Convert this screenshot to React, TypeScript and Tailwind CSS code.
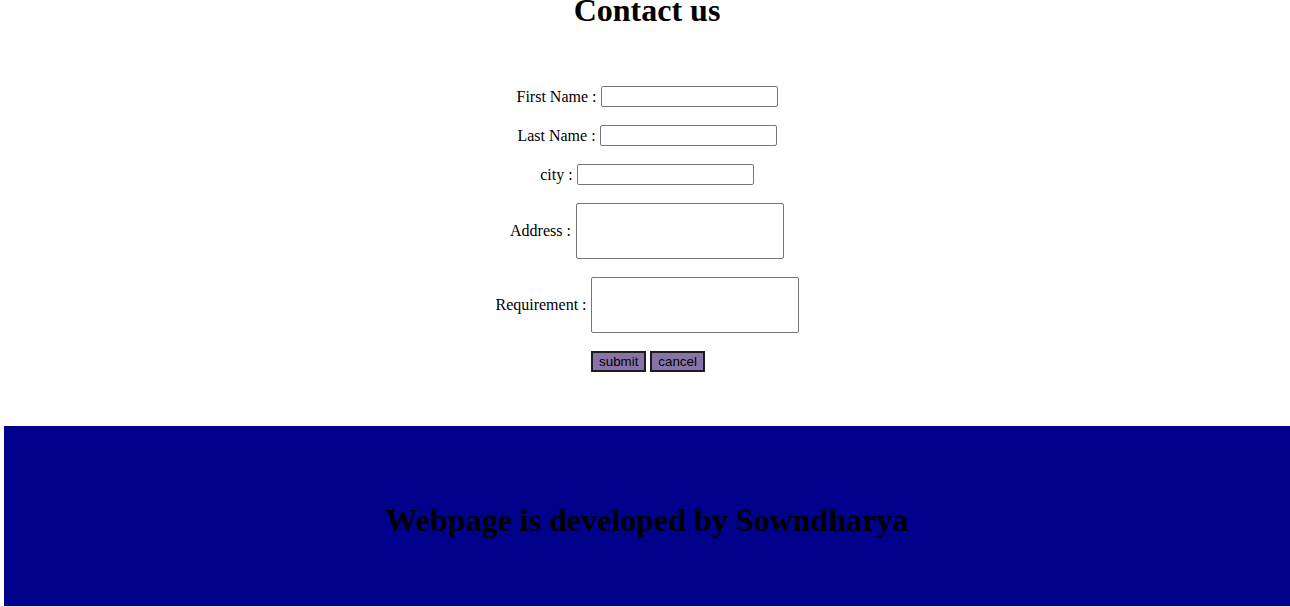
import React from 'react';

const serif = { fontFamily: '"Liberation Serif", "Times New Roman", serif' };

function Row({ label, children }: { label: string; children: React.ReactNode }) {
  return (
    <div className="flex items-center justify-center gap-1 text-base leading-[18px] text-black">
      <span>{label} :</span>
      {children}
    </div>
  );
}

export default function App() {
  return (
    <div className="bg-white pl-1 h-[607px] overflow-hidden flex flex-col" style={serif}>
      <h1 className="mt-[-8px] text-[32px] leading-[37px] font-bold text-center text-black">Contact us</h1>

      <form className="mt-[57px] flex flex-col gap-[18px]" onSubmit={e => e.preventDefault()}>
        <Row label="First Name">
          <input type="text" className="w-[177px] h-[21px] border border-[#767676] rounded-[2px] bg-white" />
        </Row>
        <Row label="Last Name">
          <input type="text" className="w-[177px] h-[21px] border border-[#767676] rounded-[2px] bg-white" />
        </Row>
        <Row label="city">
          <input type="text" className="w-[177px] h-[21px] border border-[#767676] rounded-[2px] bg-white" />
        </Row>
        <Row label="Address">
          <textarea className="ml-px w-[208px] h-[56px] border border-[#767676] rounded-[2px] bg-white resize-none" />
        </Row>
        <Row label="Requirement">
          <textarea className="w-[208px] h-[56px] border border-[#767676] rounded-[2px] bg-white resize-none" />
        </Row>
        <div className="flex justify-center gap-1 pl-[2px]" style={{ fontFamily: '"Liberation Sans", Arial, sans-serif' }}>
          <button type="submit" className="h-[21px] px-[6px] text-[13.33px] leading-none bg-[#8873a6] border-2 border-[#1c1c1c] text-black">
            submit
          </button>
          <button type="button" className="h-[21px] px-[6px] text-[13.33px] leading-none bg-[#8873a6] border-2 border-[#1c1c1c] text-black">
            cancel
          </button>
        </div>
      </form>

      <footer className="mt-[54px] h-[180px] bg-[#00008b] pt-[76px]">
        <h1 className="text-[32px] leading-[37px] font-bold text-center text-black">Webpage is developed by Sowndharya</h1>
      </footer>
      <div className="h-px bg-[#dcdcdc] -ml-1" />
    </div>
  );
}
